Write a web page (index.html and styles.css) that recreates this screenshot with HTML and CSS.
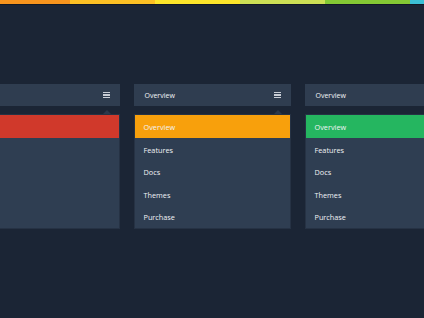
FILE: index.html
```html
<!DOCTYPE html>
<html lang="en">
<head>
    <meta charset="UTF-8">
    <meta name="viewport" content="width=device-width, initial-scale=1.0">
    <title>Dropdown Menus</title>
    <link rel="stylesheet" href="styles.css">
</head>
<body>
    <!-- Rainbow stripe -->
    <div class="stripe">
        <span class="s1"></span><span class="s2"></span><span class="s3"></span>
        <span class="s4"></span><span class="s5"></span><span class="s6"></span>
    </div>

    <!-- Menus -->
    <div class="menus">
        <div class="panel red">
            <div class="bar">
                <span class="bar-title"></span>
                <span class="burger"><i></i><i></i><i></i></span>
            </div>
            <ul class="menu">
                <li class="active"></li>
                <li></li>
                <li></li>
                <li></li>
                <li></li>
            </ul>
        </div>

        <div class="panel orange">
            <div class="bar">
                <span class="bar-title">Overview</span>
                <span class="burger"><i></i><i></i><i></i></span>
            </div>
            <ul class="menu">
                <li class="active">Overview</li>
                <li>Features</li>
                <li>Docs</li>
                <li>Themes</li>
                <li>Purchase</li>
            </ul>
        </div>

        <div class="panel green">
            <div class="bar">
                <span class="bar-title">Overview</span>
                <span class="burger"><i></i><i></i><i></i></span>
            </div>
            <ul class="menu">
                <li class="active">Overview</li>
                <li>Features</li>
                <li>Docs</li>
                <li>Themes</li>
                <li>Purchase</li>
            </ul>
        </div>
    </div>
</body>
</html>
```

FILE: styles.css
```css
/* Global Styles */
body {
    margin: 0;
    padding: 0;
    background: #1b2535;
    font-family: "Open Sans", Arial, sans-serif;
    height: 100vh;
    overflow: hidden;
}
/* Top stripe */
.stripe {
    display: flex;
    height: 4px;
    border-bottom: 1px solid #111825;
}
.stripe span { height: 4px; }
.s1 { width: 70px; background: #f7941d; }
.s2 { width: 85px; background: #fcc024; }
.s3 { width: 85px; background: #fde52a; }
.s4 { width: 85px; background: #cde055; }
.s5 { width: 85px; background: #84c934; }
.s6 { flex: 1; background: #3cc0d6; }
/* Menu panels */
.menus {
    display: flex;
    justify-content: center;
    gap: 14px;
    margin-top: 79px;
}
.panel {
    flex: 0 0 157px;
    width: 157px;
}
.bar {
    position: relative;
    height: 22px;
    background: #2f3d50;
    display: flex;
    align-items: center;
    justify-content: space-between;
    padding: 0 10px 0 11px;
    color: #f2f4f7;
    font-size: 7px;
    margin-bottom: 8px;
}
.bar::after {
    content: "";
    position: absolute;
    right: 9px;
    bottom: -8px;
    border: 4px solid transparent;
    border-bottom-color: #2a384b;
}
.burger {
    display: flex;
    flex-direction: column;
    gap: 0.8px;
    width: 7px;
}
.burger i {
    display: block;
    height: 1.6px;
    background: #c9ced6;
}
.menu {
    list-style: none;
    margin: 0;
    padding: 0;
    background: #2f3e52;
    border: 1px solid #263244;
}
.menu li {
    height: 22.6px;
    line-height: 24px;
    padding-left: 9px;
    font-size: 7.3px;
    font-weight: 500;
    color: #f1f3f6;
}
.menu li.active { font-weight: 400; }
.red .active { background: #d0392b; }
.orange .active { background: #f8a00c; }
.green .active { background: #25b660; }
```
